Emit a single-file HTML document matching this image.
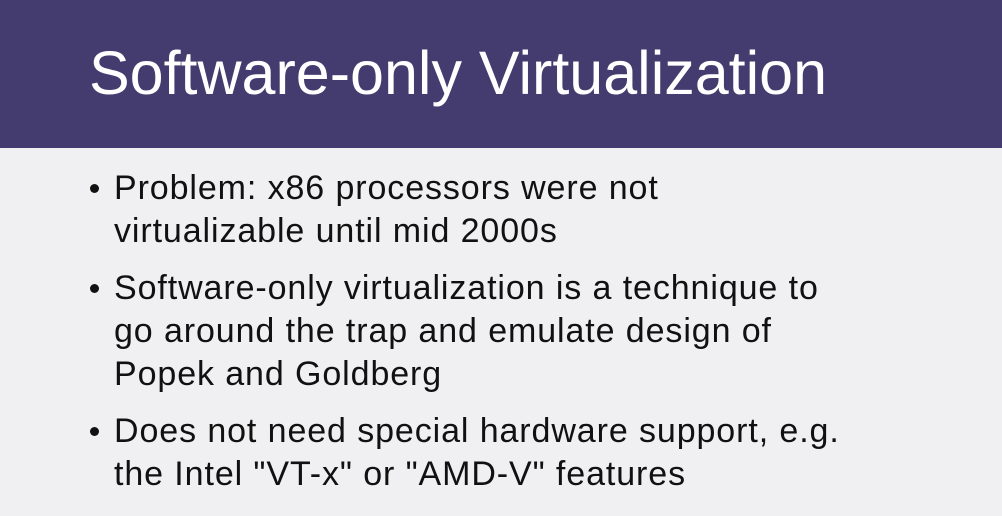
<!DOCTYPE html>
<html><head><style>
html,body{margin:0;padding:0}
body{width:1002px;height:516px;background:#f0f0f2;position:relative;overflow:hidden;font-family:"Liberation Sans",sans-serif}
.hd{position:absolute;left:0;top:0;width:1002px;height:148px;background:#443b6e}
.hd div{position:absolute;left:89px;top:38px;color:#fff;font-size:61px;white-space:nowrap;letter-spacing:0}
.l{position:absolute;left:114px;font-size:34px;color:#111;white-space:nowrap;letter-spacing:0.9px}
.b{position:absolute;left:90px;width:9px;height:9px;border-radius:50%;background:#111}
</style></head><body>
<div class="hd"><div>Software-only Virtualization</div></div>
<div class="b" style="top:184px"></div>
<div class="l" style="top:169px">Problem: x86 processors were not</div>
<div class="l" style="top:212px">virtualizable until mid 2000s</div>
<div class="b" style="top:284px"></div>
<div class="l" style="top:269px">Software-only virtualization is a technique to</div>
<div class="l" style="top:312px">go around the trap and emulate design of</div>
<div class="l" style="top:355px">Popek and Goldberg</div>
<div class="b" style="top:427px"></div>
<div class="l" style="top:412px">Does not need special hardware support, e.g.</div>
<div class="l" style="top:455px">the Intel "VT-x" or "AMD-V" features</div>
</body></html>
